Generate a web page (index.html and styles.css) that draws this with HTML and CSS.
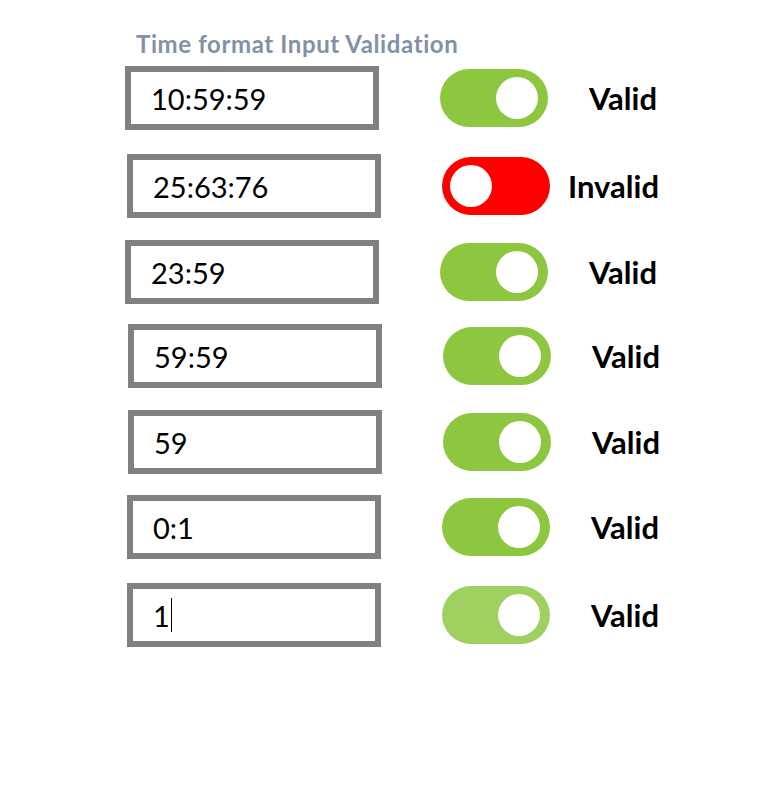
FILE: index.html
```html
<!DOCTYPE html>
<html>
<head>
<meta charset="utf-8">
<link rel="stylesheet" href="styles.css">
</head>
<body>
<div class="page">
  <h1 class="title">Time format Input Validation</h1>
  <div class="list">
    <div class="row r1">
      <div class="field">10:59:59</div>
      <div class="toggle on"><span class="knob"></span></div>
      <div class="status">Valid</div>
    </div>
    <div class="row r2">
      <div class="field">25:63:76</div>
      <div class="toggle off"><span class="knob"></span></div>
      <div class="status">Invalid</div>
    </div>
    <div class="row r3">
      <div class="field">23:59</div>
      <div class="toggle on"><span class="knob"></span></div>
      <div class="status">Valid</div>
    </div>
    <div class="row r4">
      <div class="field">59:59</div>
      <div class="toggle on"><span class="knob"></span></div>
      <div class="status">Valid</div>
    </div>
    <div class="row r5">
      <div class="field">59</div>
      <div class="toggle on"><span class="knob"></span></div>
      <div class="status">Valid</div>
    </div>
    <div class="row r6">
      <div class="field">0:1</div>
      <div class="toggle on"><span class="knob"></span></div>
      <div class="status">Valid</div>
    </div>
    <div class="row r7">
      <div class="field">1<span class="caret"></span></div>
      <div class="toggle on focus"><span class="knob"></span></div>
      <div class="status">Valid</div>
    </div>
  </div>
</div>
</body>
</html>
```
FILE: styles.css
```css
* { box-sizing: border-box; }
html, body { margin: 0; padding: 0; background: #fff; }
body { font-family: Lato, "Open Sans", sans-serif; color: #000; }
.page { width: 772px; height: 800px; padding-top: 29px; }
.title {
  margin: 0 0 8px 136px;
  font-size: 24px;
  font-weight: 700;
  letter-spacing: 0.6px;
  line-height: 29px;
  color: #8391a6;
}
.list { display: flex; flex-direction: column; }
.row { display: flex; align-items: center; height: 64px; padding-left: 125px; }
.field {
  width: 254px;
  height: 64px;
  border: 6px solid #808080;
  display: flex;
  align-items: center;
  padding-left: 20px;
  font-size: 29px;
  line-height: 1;
}
.caret { display: inline-block; width: 1px; height: 34px; background: #000; margin-left: 1px; }
.toggle {
  width: 108px;
  height: 58px;
  border-radius: 29px;
  margin-left: 61px;
  display: flex;
  align-items: center;
  padding: 0 10px 0 8px;
}
.toggle.on { background: #8dc63f; justify-content: flex-end; }
.toggle.off { background: #ff0000; justify-content: flex-start; }
.toggle.focus { background: #a0d05f; }
.knob { width: 42px; height: 42px; border-radius: 50%; background: #fff; }
.status {
  width: 109px;
  text-align: right;
  font-size: 31px;
  font-weight: 700;
  line-height: 1;
}
.r2 { margin-top: 24px; padding-left: 127px; }
.r3 { margin-top: 22px; padding-left: 125px; }
.r4 { margin-top: 20px; padding-left: 128px; }
.r5 { margin-top: 22px; padding-left: 128px; }
.r6 { margin-top: 21px; padding-left: 127px; }
.r7 { margin-top: 24px; padding-left: 127px; }
```
